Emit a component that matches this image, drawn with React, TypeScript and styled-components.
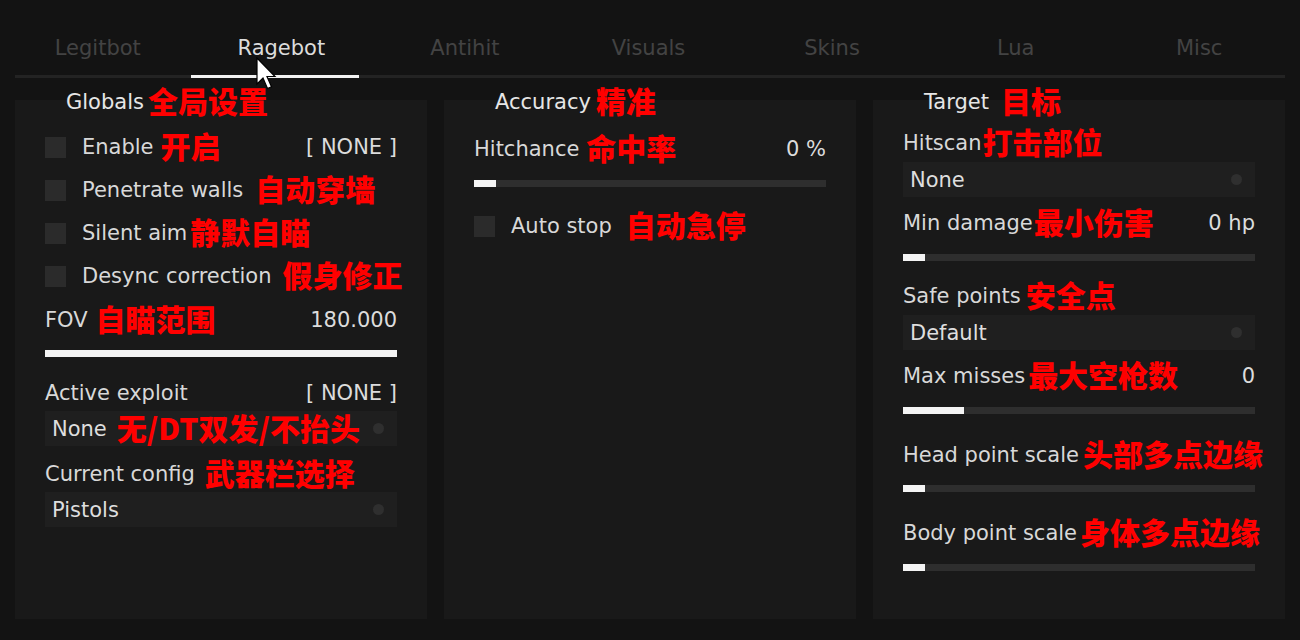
import React from 'react';
import styled, { createGlobalStyle } from 'styled-components';

const Global = createGlobalStyle`
  html, body { margin: 0; padding: 0; background: #131313; }
  body { font-family: "DejaVu Sans", Verdana, sans-serif; }
`;

const Page = styled.div`
  position: relative;
  width: 1300px;
  height: 640px;
  box-sizing: border-box;
  padding: 0 15px;
  overflow: hidden;
  background: #131313;
  display: flex;
  flex-direction: column;
`;

const Tabs = styled.nav`
  display: grid;
  grid-template-columns: repeat(7, 1fr);
  margin: 33px -6px 0 -9px;
  height: 30px;
`;

const Tab = styled.div<{ $active?: boolean }>`
  text-align: center;
  font-size: 21px;
  line-height: 30px;
  color: ${p => (p.$active ? '#dcdcdc' : '#434343')};
`;

const Rule = styled.div`
  margin-top: 12px;
  height: 3px;
  background: #232323;
  display: flex;
`;

const Indicator = styled.div`
  margin-left: 176px;
  width: 168px;
  background: #f2f2f2;
`;

const Columns = styled.div`
  margin-top: 22px;
  display: grid;
  grid-template-columns: repeat(3, 412px);
  column-gap: 17px;
`;

const Panel = styled.section`
  height: 519px;
  box-sizing: border-box;
  background: #191919;
  padding: 0 30px;
  display: flex;
  flex-direction: column;
`;

const Title = styled.div`
  margin: -10px 0 0 21px;
  height: 24px;
  display: flex;
  align-items: center;
  font-size: 21px;
  line-height: 24px;
  color: #e6e6e6;
  white-space: nowrap;
`;

const Row = styled.div<{ $mt: number }>`
  margin-top: ${p => p.$mt}px;
  height: 24px;
  display: flex;
  align-items: center;
  font-size: 21px;
  line-height: 24px;
  color: #d8d8d8;
  white-space: nowrap;
`;

const Check = styled.span`
  width: 21px;
  height: 21px;
  flex: none;
  background: #2b2b2b;
  margin-right: 16px;
`;

const Note = styled.span<{ $gap?: number }>`
  margin-left: ${p => p.$gap ?? 0}px;
  padding-bottom: 4px;
  font-family: "Noto Sans CJK SC", "DejaVu Sans", sans-serif;
  font-weight: 900;
  font-size: 30px;
  line-height: 24px;
  color: #ff0000;
  white-space: nowrap;
`;

const Value = styled.span`
  margin-left: auto;
  color: #dcdcdc;
`;

const Track = styled.div<{ $mt: number }>`
  margin-top: ${p => p.$mt}px;
  height: 7px;
  background: #2e2e2e;
  display: flex;
`;

const Fill = styled.div`
  background: #f4f4f4;
`;

const Select = styled.div<{ $mt: number }>`
  margin-top: ${p => p.$mt}px;
  height: 35px;
  box-sizing: border-box;
  background: #1f1f1f;
  padding: 0 13px 0 7px;
  display: flex;
  align-items: center;
  font-size: 21px;
  line-height: 24px;
  color: #dedede;
  white-space: nowrap;
`;

const Dot = styled.span`
  margin-left: auto;
  width: 11px;
  height: 11px;
  border-radius: 50%;
  background: #2f2f2f;
  flex: none;
`;

const Cursor = styled.svg`
  position: absolute;
  left: 256px;
  top: 57px;
`;

const Slider: React.FC<{ mt: number; pct: number }> = ({ mt, pct }) => (
  <Track $mt={mt}>
    <Fill style={{ width: `${pct}%` }} />
  </Track>
);

export default function App() {
  const tabs = ['Legitbot', 'Ragebot', 'Antihit', 'Visuals', 'Skins', 'Lua', 'Misc'];
  return (
    <Page>
      <Global />
      <Tabs>
        {tabs.map(t => (
          <Tab key={t} $active={t === 'Ragebot'}>{t}</Tab>
        ))}
      </Tabs>
      <Rule>
        <Indicator />
      </Rule>
      <Columns>
        <Panel>
          <Title>Globals<Note $gap={4}>全局设置</Note></Title>
          <Row $mt={21}><Check />Enable<Note $gap={7}>开启</Note><Value>[ NONE ]</Value></Row>
          <Row $mt={19}><Check />Penetrate walls<Note $gap={12}>自动穿墙</Note></Row>
          <Row $mt={19}><Check />Silent aim<Note $gap={3}>静默自瞄</Note></Row>
          <Row $mt={19}><Check />Desync correction<Note $gap={11}>假身修正</Note></Row>
          <Row $mt={20}>FOV<Note $gap={8}>自瞄范围</Note><Value>180.000</Value></Row>
          <Slider mt={18} pct={100} />
          <Row $mt={24}>Active exploit<Value>[ NONE ]</Value></Row>
          <Select $mt={6}>None<Note $gap={10}>无/DT双发/不抬头</Note><Dot /></Select>
          <Row $mt={16}>Current config<Note $gap={10}>武器栏选择</Note></Row>
          <Select $mt={6}>Pistols<Dot /></Select>
        </Panel>
        <Panel>
          <Title>Accuracy<Note $gap={5}>精准</Note></Title>
          <Row $mt={23}>Hitchance<Note $gap={7}>命中率</Note><Value>0 %</Value></Row>
          <Slider mt={19} pct={6.25} />
          <Row $mt={27}><Check />Auto stop<Note $gap={14}>自动急停</Note></Row>
        </Panel>
        <Panel>
          <Title>Target<Note $gap={12}>目标</Note></Title>
          <Row $mt={17}>Hitscan<Note $gap={1}>打击部位</Note></Row>
          <Select $mt={7}>None<Dot /></Select>
          <Row $mt={14}>Min damage<Note $gap={1}>最小伤害</Note><Value>0 hp</Value></Row>
          <Slider mt={19} pct={6.25} />
          <Row $mt={23}>Safe points<Note $gap={5}>安全点</Note></Row>
          <Select $mt={7}>Default<Dot /></Select>
          <Row $mt={14}>Max misses<Note $gap={3}>最大空枪数</Note><Value>0</Value></Row>
          <Slider mt={19} pct={17.3} />
          <Row $mt={29}>Head point scale<Note $gap={4}>头部多点边缘</Note></Row>
          <Slider mt={18} pct={6.25} />
          <Row $mt={29}>Body point scale<Note $gap={3}>身体多点边缘</Note></Row>
          <Slider mt={19} pct={6.25} />
        </Panel>
      </Columns>
      <Cursor width="22" height="35" viewBox="0 0 22 35">
        <path
          d="M1 1 L1 27 L7 21 L11.5 31.5 L15.5 29.8 L11 19.5 L19 19.5 Z"
          fill="#ffffff"
          stroke="#000000"
          strokeWidth="1.2"
          strokeLinejoin="miter"
        />
      </Cursor>
    </Page>
  );
}
